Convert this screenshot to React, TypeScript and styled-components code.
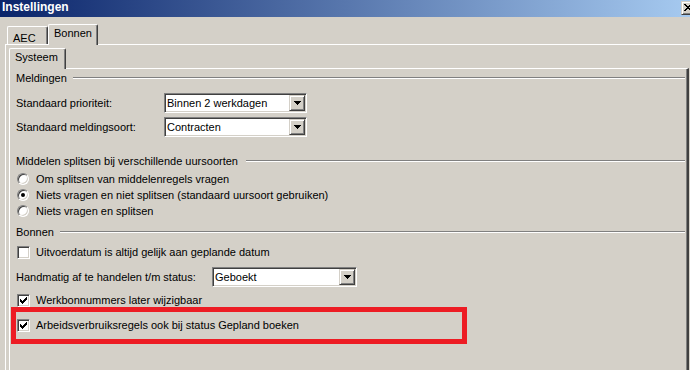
import React from "react";
import styled, { createGlobalStyle } from "styled-components";

const GlobalStyle = createGlobalStyle`
  html, body { margin: 0; padding: 0; background: #d4d0c8; }
  body {
    font-family: "Liberation Sans", Arial, sans-serif;
    font-size: 11px;
    color: #000;
  }
  * { box-sizing: border-box; }
`;

const Window = styled.div`
  width: 690px;
  height: 370px;
  overflow: hidden;
  display: flex;
  flex-direction: column;
  background: #d4d0c8;
`;

const TitleBar = styled.div`
  flex: none;
  height: 17px;
  display: flex;
  align-items: flex-start;
  justify-content: space-between;
  background: linear-gradient(to right, #0a246a 0%, #a6caf0 100%);
`;

const Title = styled.span`
  padding-left: 2px;
  font-weight: bold;
  font-size: 12px;
  line-height: 15px;
  color: #fff;
`;

const CloseButton = styled.div`
  width: 16px;
  height: 14px;
  margin-top: 1px;
  margin-right: -7px;
  background: #d4d0c8;
  border: 1px solid;
  border-color: #d4d0c8 #404040 #404040 #d4d0c8;
  box-shadow: inset 1px 1px #fff, inset -1px -1px #808080;
  display: flex;
  padding: 2px 0 0 2px;
`;

const Body = styled.div`
  flex: 1;
  display: flex;
  flex-direction: column;
  padding: 7px 0 0 5px;
  min-height: 0;
`;

const TabStrip = styled.div<{ $inset: number }>`
  display: flex;
  align-items: flex-end;
  padding-left: ${(p) => p.$inset}px;
  margin-bottom: -1px;
  position: relative;
  z-index: 1;
`;

const Tab = styled.div<{ $active?: boolean; $w: number }>`
  width: ${(p) => p.$w}px;
  height: ${(p) => (p.$active ? 21 : 18)}px;
  margin-bottom: ${(p) => (p.$active ? 0 : 1)}px;
  padding: ${(p) => (p.$active ? 2 : 5)}px 0 0 5px;
  line-height: 13px;
  background: #d4d0c8;
  border-top: 1px solid #fff;
  border-left: 1px solid #fff;
  border-right: 1px solid #404040;
  box-shadow: inset -1px 0 #808080;
  border-top-left-radius: 2px;
  border-top-right-radius: 2px;
  white-space: nowrap;
`;

const OuterPanel = styled.div`
  flex: 1;
  display: flex;
  flex-direction: column;
  margin-right: -4px;
  padding: 3px 4px 0 3px;
  border-top: 1px solid #fff;
  border-left: 1px solid #fff;
  border-right: 1px solid #404040;
`;

const InnerPanel = styled.div`
  flex: 1;
  display: flex;
  flex-direction: column;
  padding: 0 2px 0 6px;
  border-top: 1px solid #fff;
  border-left: 1px solid #fff;
  border-right: 2px solid #404040;
  box-shadow: inset -1px 0 #808080;
`;

const GroupHeader = styled.div<{ $mt: number; $gap?: number }>`
  display: flex;
  align-items: center;
  height: 14px;
  margin-top: ${(p) => p.$mt}px;
  gap: ${(p) => p.$gap ?? 6}px;
  white-space: nowrap;
`;

const GroupLine = styled.div`
  flex: 1;
  height: 2px;
  border-top: 1px solid #808080;
  border-bottom: 1px solid #fff;
`;

const FormRow = styled.div<{ $mt: number }>`
  display: flex;
  align-items: center;
  height: 20px;
  margin-top: ${(p) => p.$mt}px;
`;

const FieldLabel = styled.span<{ $w: number }>`
  width: ${(p) => p.$w}px;
  white-space: nowrap;
`;

const SelectBox = styled.div<{ $w: number }>`
  width: ${(p) => p.$w}px;
  height: 20px;
  display: flex;
  align-items: center;
  justify-content: space-between;
  padding: 0 1px 0 1px;
  background: #fff;
  border: 1px solid;
  border-color: #808080 #fff #fff #808080;
  box-shadow: inset 1px 1px #404040, inset -1px -1px #d4d0c8;
`;

const SelectText = styled.span`
  padding-left: 1px;
  white-space: nowrap;
`;

const DropButton = styled.div`
  width: 16px;
  height: 16px;
  background: #d4d0c8;
  border: 1px solid;
  border-color: #d4d0c8 #404040 #404040 #d4d0c8;
  box-shadow: inset 1px 1px #fff, inset -1px -1px #808080;
  display: flex;
  align-items: center;
  justify-content: center;
`;

const OptionRow = styled.div<{ $mt: number; $h?: number }>`
  position: relative;
  display: flex;
  align-items: center;
  gap: 6px;
  height: ${(p) => p.$h ?? 16}px;
  margin-top: ${(p) => p.$mt}px;
  padding-left: 1px;
  white-space: nowrap;
`;

const ControlSlot = styled.span`
  width: 13px;
  height: 13px;
  display: flex;
  align-items: center;
  justify-content: flex-start;
  flex: none;
`;

const RadioCircle = styled.span<{ $checked?: boolean }>`
  width: 12px;
  height: 12px;
  border-radius: 50%;
  background: #fff;
  border: 1px solid;
  border-color: #808080 #fff #fff #808080;
  box-shadow: inset 1px 1px #404040, inset -1px -1px #d4d0c8;
  display: flex;
  align-items: center;
  justify-content: center;
  &::after {
    content: "";
    display: ${(p) => (p.$checked ? "block" : "none")};
    width: 4px;
    height: 4px;
    border-radius: 50%;
    background: #000;
  }
`;

const CheckBox = styled.span`
  width: 13px;
  height: 13px;
  background: #fff;
  border: 1px solid;
  border-color: #808080 #fff #fff #808080;
  box-shadow: inset 1px 1px #404040, inset -1px -1px #d4d0c8;
  display: block;
`;

const Highlight = styled.div`
  position: absolute;
  left: -5px;
  top: -10px;
  width: 456px;
  height: 37px;
  border: 5px solid #ed1c24;
  pointer-events: none;
`;

const Arrow = () => (
  <svg width="7" height="4" viewBox="0 0 7 4" style={{ display: "block" }} shapeRendering="crispEdges">
    <path d="M0 0H7V1H6V2H5V3H4V4H3V3H2V2H1V1H0Z" fill="#000" />
  </svg>
);

const CloseGlyph = () => (
  <svg width="8" height="7" viewBox="0 0 8 7" style={{ display: "block" }} shapeRendering="crispEdges">
    <path
      d="M0 0H2V1H3V2H5V1H6V0H8V1H7V2H6V3H5V4H6V5H7V6H8V7H6V6H5V5H3V6H2V7H0V6H1V5H2V4H3V3H2V2H1V1H0Z"
      fill="#000"
    />
  </svg>
);

const CheckMark = () => (
  <svg width="11" height="11" viewBox="0 0 11 11" style={{ display: "block" }} shapeRendering="crispEdges">
    <path d="M8 2H9V5H8V6H7V7H6V8H5V9H4V8H3V7H2V4H3V5H4V6H5V5H6V4H7V3H8Z" fill="#000" />
  </svg>
);

const Select = ({ w, value }: { w: number; value: string }) => (
  <SelectBox $w={w}>
    <SelectText>{value}</SelectText>
    <DropButton>
      <Arrow />
    </DropButton>
  </SelectBox>
);

const Radio = ({ label, checked, mt }: { label: string; checked?: boolean; mt: number }) => (
  <OptionRow $mt={mt}>
    <ControlSlot>
      <RadioCircle $checked={checked} />
    </ControlSlot>
    <span>{label}</span>
  </OptionRow>
);

const Check = ({
  label,
  checked,
  mt,
  highlighted,
}: {
  label: string;
  checked?: boolean;
  mt: number;
  highlighted?: boolean;
}) => (
  <OptionRow $mt={mt}>
    <ControlSlot>
      <CheckBox>{checked && <CheckMark />}</CheckBox>
    </ControlSlot>
    <span>{label}</span>
    {highlighted && <Highlight />}
  </OptionRow>
);

export default function App() {
  return (
    <>
      <GlobalStyle />
      <Window>
        <TitleBar>
          <Title>Instellingen</Title>
          <CloseButton>
            <CloseGlyph />
          </CloseButton>
        </TitleBar>
        <Body>
          <TabStrip $inset={2}>
            <Tab $w={41}>AEC</Tab>
            <Tab $w={50} $active>
              Bonnen
            </Tab>
          </TabStrip>
          <OuterPanel>
            <TabStrip $inset={0}>
              <Tab $w={57} $active>
                Systeem
              </Tab>
            </TabStrip>
            <InnerPanel>
              <GroupHeader $mt={2}>
                <span>Meldingen</span>
                <GroupLine />
              </GroupHeader>
              <FormRow $mt={8}>
                <FieldLabel $w={148}>Standaard prioriteit:</FieldLabel>
                <Select w={143} value="Binnen 2 werkdagen" />
              </FormRow>
              <FormRow $mt={4}>
                <FieldLabel $w={148}>Standaard meldingsoort:</FieldLabel>
                <Select w={143} value="Contracten" />
              </FormRow>

              <GroupHeader $mt={17} $gap={8}>
                <span>Middelen splitsen bij verschillende uursoorten</span>
                <GroupLine />
              </GroupHeader>
              <Radio mt={3} label="Om splitsen van middelenregels vragen" />
              <Radio mt={0} checked label="Niets vragen en niet splitsen (standaard uursoort gebruiken)" />
              <Radio mt={0} label="Niets vragen en splitsen" />

              <GroupHeader $mt={6}>
                <span>Bonnen</span>
                <GroupLine />
              </GroupHeader>
              <Check mt={5} label="Uitvoerdatum is altijd gelijk aan geplande datum" />
              <FormRow $mt={7}>
                <FieldLabel $w={196}>Handmatig af te handelen t/m status:</FieldLabel>
                <Select w={145} value="Geboekt" />
              </FormRow>
              <Check mt={5} checked label="Werkbonnummers later wijzigbaar" />
              <Check mt={9} checked highlighted label="Arbeidsverbruiksregels ook bij status Gepland boeken" />
            </InnerPanel>
          </OuterPanel>
        </Body>
      </Window>
    </>
  );
}
